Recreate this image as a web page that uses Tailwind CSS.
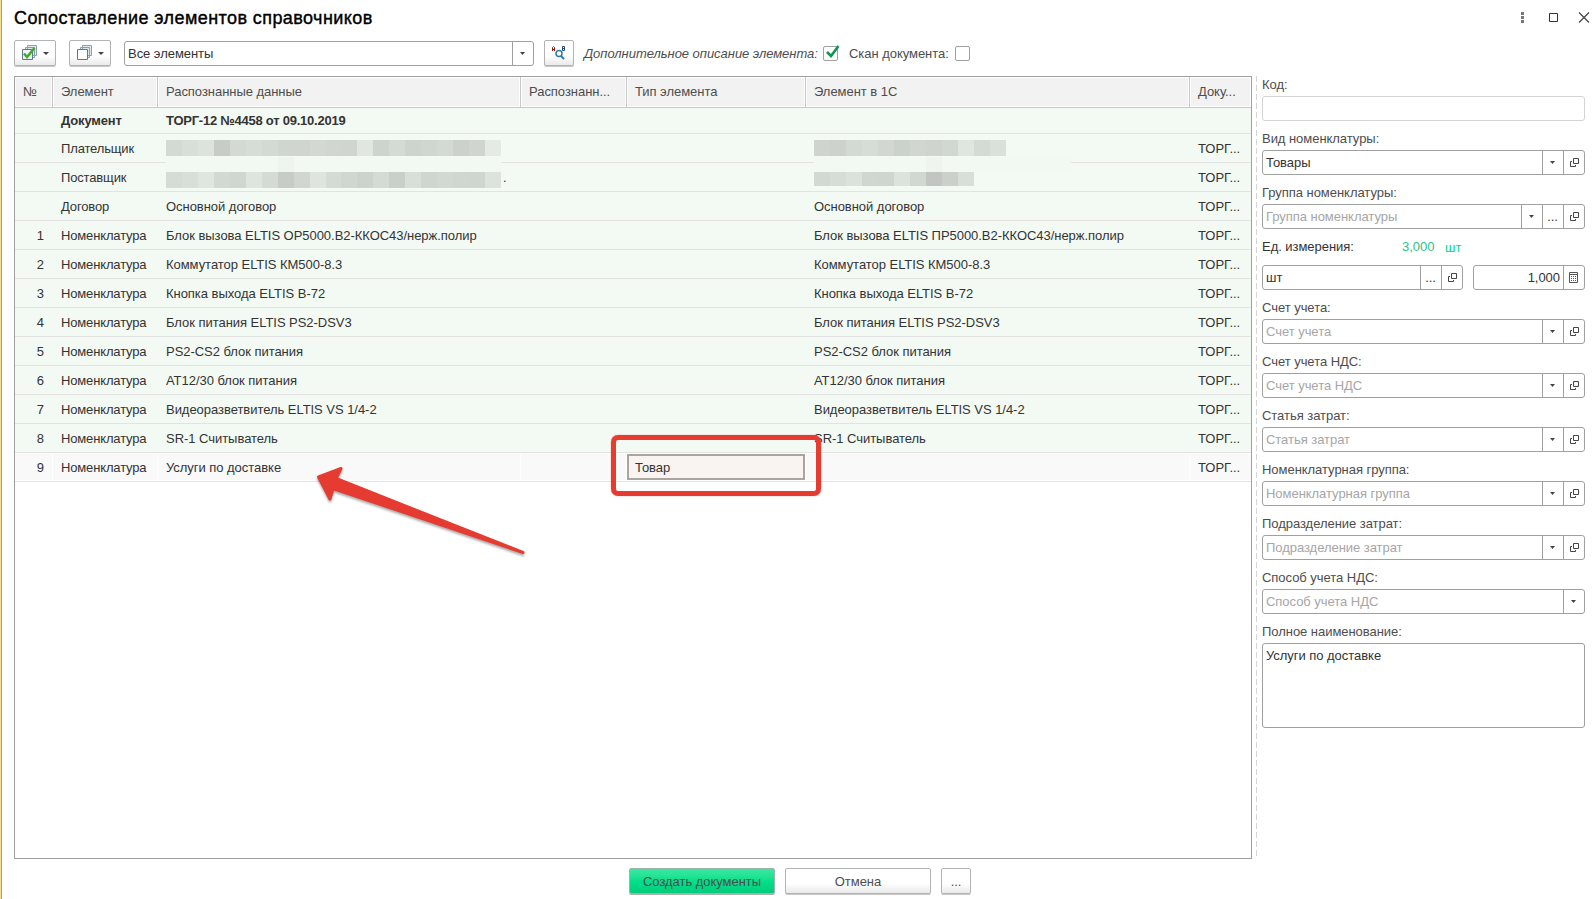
<!DOCTYPE html>
<html lang="ru">
<head>
    <meta charset="UTF-8">
    <meta name="viewport" content="width=device-width, initial-scale=1.0">
    <title>Сопоставление элементов справочников</title>
    <script src="https://cdn.jsdelivr.net/npm/@tailwindcss/browser@4"></script>
</head>
<body class="relative flex h-[899px] w-[1596px] overflow-hidden bg-white font-['Liberation_Sans',Arial,sans-serif] text-[13px] leading-4 tracking-[-0.04px] text-[#333]">
    <div class="w-[2px] shrink-0 border-r border-[#a0a0a0] bg-[#f5dd94]"></div>

    <div class="flex w-[1250px] shrink-0 flex-col pl-3">
        <!-- title -->
        <h1 class="h-10 pt-[7px] text-[18px] leading-[22px] tracking-[0.42px] text-black [-webkit-text-stroke:0.4px_black]">Сопоставление элементов справочников</h1>

        <!-- toolbar -->
        <div class="flex h-9 items-start">
            <button class="flex h-[26px] w-[42px] items-center gap-[5px] rounded-[2px] border border-[#b3b3b3] bg-linear-to-b from-white from-60% to-[#eaeaea] pl-[7px] shadow-[0_1px_0_#c8c8c8]">
                <svg width="16" height="16" viewBox="0 0 16 16" fill="#dfe8ef" stroke="#8da0b3">
                    <path d="M5.500.5h9v10h-9zM3.500 2.500h9v10h-9z"/>
                    <path d="M.5 4.500h10v10h-10z" fill="#eef4f8" stroke="#5d7890"/>
                    <path d="M2 8.500l3 3.500L12.500 3" fill="none" stroke="#3fae26" stroke-width="2.600"/>
                </svg>
                <svg width="6" height="3" viewBox="0 0 6 3"><path d="M0 0h6L3 3z" fill="#444"/></svg>
            </button>
            <button class="ml-[13px] flex h-[26px] w-[42px] items-center gap-[5px] rounded-[2px] border border-[#b3b3b3] bg-linear-to-b from-white from-60% to-[#eaeaea] pl-[7px] shadow-[0_1px_0_#c8c8c8]">
                <svg width="16" height="16" viewBox="0 0 16 16" fill="#dfe8ef" stroke="#8da0b3">
                    <path d="M5.500.5h9v10h-9zM3.500 2.500h9v10h-9z"/>
                    <path d="M.5 4.500h10v10h-10z" fill="#fff" stroke="#5d7890"/>
                </svg>
                <svg width="6" height="3" viewBox="0 0 6 3"><path d="M0 0h6L3 3z" fill="#444"/></svg>
            </button>
            <div class="mt-px ml-[13px] flex h-[25px] w-[410px] rounded-[3px] border border-[#a0a0a0]">
                <span class="flex-1 pt-1 pl-[3px]">Все элементы</span>
                <span class="flex w-[21px] items-center justify-center border-l border-[#a0a0a0] pr-px"><svg width="5" height="3" viewBox="0 0 5 3"><path d="M0 0h5L2.500 3z" fill="#444"/></svg></span>
            </div>
            <button class="ml-2.5 flex h-[26px] w-[30px] items-center justify-center rounded-[2px] border border-[#b3b3b3] bg-linear-to-b from-white from-60% to-[#eaeaea] pb-px shadow-[0_1px_0_#c8c8c8]">
                <svg width="14" height="14" viewBox="0 0 14 14" fill="none">
                    <path d="M.5 5V1.500L1.500.5l1 1V5M.5 3.500h2" stroke="#8b1a10"/>
                    <path d="M10.500.5v4h2v-4zM10.500 2.500h2" stroke="#174f86"/>
                    <circle cx="7" cy="7.500" r="3" stroke="#3079ae" stroke-width="1.500"/>
                    <path d="M9 10l3 3" stroke="#3079ae" stroke-width="2"/>
                </svg>
            </button>
            <span class="mt-1.5 ml-2.5 w-[239px] whitespace-nowrap text-[#4d4d4d] italic">Дополнительное описание элемента:</span>
            <span class="mt-1.5 size-[15px] rounded-[2px] border border-[#a0a0a0]">
                <svg class="-mt-[2px] ml-[1px]" width="15" height="14" viewBox="0 0 15 14"><path d="M2 7l4 4 7.500-10" fill="none" stroke="#0d9850" stroke-width="2.600"/></svg>
            </span>
            <span class="mt-1.5 ml-[11px] w-[106px] whitespace-nowrap text-[#4d4d4d]">Скан документа:</span>
            <span class="mt-1.5 size-[15px] rounded-[2px] border border-[#a0a0a0]"></span>
        </div>

        <!-- table -->
        <div class="h-[783px] w-[1238px] border border-[#a0a0a0]">
            <div id="head" class="grid h-[31px] grid-cols-[38px_105px_363px_106px_179px_384px_61px] border-b border-[#c8c8c8] text-[#4d4d4d]"></div>
            <div id="rows"></div>
        </div>

        <!-- bottom buttons -->
        <div class="mt-[9px] flex gap-2.5 pl-[615px]">
            <button class="h-[26px] w-[146px] rounded-[2px] border border-[#9fb5aa] bg-linear-to-b from-[#38e8a2] via-[#00e08a] to-[#00cc7c] pt-px text-[#4d4d4d] shadow-[0_1px_0_#b0b0b0]">Создать документы</button>
            <button class="h-[26px] w-[146px] rounded-[2px] border border-[#b3b3b3] bg-linear-to-b from-white from-60% to-[#eaeaea] pt-px text-[#4d4d4d] shadow-[0_1px_0_#c8c8c8]">Отмена</button>
            <button class="h-[26px] w-[30px] rounded-[2px] border border-[#b3b3b3] bg-linear-to-b from-white from-60% to-[#eaeaea] pt-px text-[#4d4d4d] shadow-[0_1px_0_#c8c8c8]">...</button>
        </div>
    </div>

    <!-- splitter -->
    <div class="mt-[76px] ml-1 h-[783px] w-px bg-[repeating-linear-gradient(to_bottom,#d4d4d4_0_6px,transparent_6px_9px)]"></div>

    <!-- item details -->
    <div class="ml-[5px] flex w-[334px] flex-col">
        <div class="flex h-[76px] items-start pt-3">
            <svg class="ml-[258px]" width="70" height="11" viewBox="0 0 70 11" fill="none">
                <path d="M1 0h3v3H1zM1 4h3v3H1zM1 8h3v3H1z" fill="#777"/>
                <path d="M29.500 1.500h8v8h-8z" stroke="#333"/>
                <path d="M59 .5l10 10M69 .5l-10 10" stroke="#444" stroke-width="1.200"/>
            </svg>
        </div>
        <div id="fields" class="w-[323px]"></div>
    </div>

    <!-- marks -->
    <div class="absolute top-[435px] left-[611px] h-[61px] w-[210px] rounded-[7px] border-[5px] border-[#e63b31] shadow-[0_0_1px_#e63b31]"></div>
    <svg class="absolute top-[460px] left-[310px] drop-shadow-[0_2px_1px_#0005]" width="220" height="100" viewBox="310 460 220 100">
        <path d="M318.500 477L341 468.500L336 478.500L523 552.500L333 488.500L330 499z" fill="#e63b31" stroke="#e63b31" stroke-width="3" stroke-linejoin="round"/>
    </svg>

    <script>
        const columns = ['№', 'Элемент', 'Распознанные данные', 'Распознанн...', 'Тип элемента', 'Элемент в 1С', 'Доку...'];
        const items = [
            ['Блок вызова ELTIS OP5000.B2-ККОС43/нерж.полир', 'Блок вызова ELTIS ПР5000.B2-ККОС43/нерж.полир'],
            ['Коммутатор ELTIS КМ500-8.3'],
            ['Кнопка выхода ELTIS B-72'],
            ['Блок питания ELTIS PS2-DSV3'],
            ['PS2-CS2 блок питания'],
            ['АТ12/30 блок питания'],
            ['Видеоразветвитель ELTIS VS 1/4-2'],
            ['SR-1 Считыватель']
        ];

        document.getElementById('head').innerHTML = columns.map(name =>
            `<div class="border-r border-[#c8c8c8] p-px last:border-r-0"><div class="h-full bg-[#f2f2f2] pt-1.5 pl-[7px] whitespace-nowrap">${name}</div></div>`
        ).join('');

        // hidden names, one shade per 16px block
        function mosaic(shades, size) {
            return `<div class="flex ${size}">` +
                shades.map(c => `<i class="h-full w-4" style="background:#${c}"></i>`).join('') + '</div>';
        }

        const payer = ['d3dad4', 'd8dfd9', 'dce3dd', 'c7ccc7', 'd3dad4', 'd6dcd6', 'd3d9d3', 'cfd5cf', 'd0d5d0', 'd3d8d3', 'd0d6d0', 'd0d5d0', 'e0e7e1', 'cdd3cd', 'd4dbd5', 'cdd3cd', 'd0d6d0', 'd3d9d3', 'ccd1cc', 'd0d5d0', 'e4ebe5'];
        const seller = ['d5dcd6', 'd8dfd9', 'dfe6e0', 'd2d9d3', 'd0d6d0', 'dee5df', 'd4dbd5', 'c7ccc7', 'd1d6d1', 'dee5df', 'd4dbd5', 'd0d7d1', 'ccd2cc', 'd4dbd5', 'c9cfc9', 'd8dfd9', 'cfd5cf', 'd2d8d2', 'd0d6d0', 'cfd5cf', 'dce3dd'];
        const payer1c = ['cfd4cf', 'cdd2cd', 'd3d9d3', 'd6dcd6', 'd2d7d2', 'cbd1cb', 'd1d6d1', 'cfd4cf', 'd1d7d1', 'dfe6e0', 'd4dad4', 'dae1db'];
        const seller1c = ['d2d8d2', 'd6ddd7', 'dbe2dc', 'd0d6d0', 'cfd5cf', 'dce3dd', 'd1d7d1', 'c2c6c2', 'cbd0cb', 'd8dfd9'];

        // blurred strip that hides the line between the two masked rows
        function strip(width) {
            return `<div class="absolute top-4 left-2 h-4 ${width} bg-[#f2f8f2] pl-28"><i class="block h-full w-4 bg-[#eef4ee]"></i></div>`;
        }

        function row(cells, cls) {
            return `<div class="grid grid-cols-[38px_105px_363px_106px_179px_384px_61px] border-b border-[#e3e3e3] ${cls}">` +
                cells.map((c, i) => `<div class="relative whitespace-nowrap ${i ? 'pl-2' : 'pr-[9px] text-right'} ${i === 1 ? 'tracking-[-0.15px]' : ''}">${c}</div>`).join('') + '</div>';
        }

        const green = 'h-[29px] bg-[#f3faf3] pt-[7px]';
        let html = row(['', 'Документ', 'ТОРГ-12 №4458 от 09.10.2019', '', '', '', ''], 'h-[26px] bg-[#f3faf3] pt-[5px] font-bold tracking-[-0.24px]');
        html += row(['', 'Плательщик', mosaic(payer, '-mt-px h-4 w-[335px]') + strip('w-[335px]'), '', '', mosaic(payer1c, '-mt-px h-4') + strip('w-[257px]'), 'ТОРГ...'], green);
        html += row(['', 'Поставщик', `<div class="flex">${mosaic(seller, 'mt-[2px] h-4 w-[335px]')}<span class="pl-[2px]">.</span></div>`, '', '', mosaic(seller1c, 'mt-[2px] h-3.5'), 'ТОРГ...'], green);
        html += row(['', 'Договор', 'Основной договор', '', '', 'Основной договор', 'ТОРГ...'], green);
        items.forEach(([src, dst = src], i) => {
            html += row([i + 1, 'Номенклатура', src, '', '', dst, 'ТОРГ...'], green);
        });
        html += `<div class="grid h-[29px] grid-cols-[38px_105px_363px_106px_179px_384px_61px] border-b border-[#e3e3e3] py-px">
            <div class="border-r border-white bg-[#f9f9f9] pt-1.5 pr-2 text-right">9</div>
            <div class="border-r border-white bg-[#f9f9f9] pt-1.5 pl-2 tracking-[-0.15px]">Номенклатура</div>
            <div class="border-r border-white bg-[#f9f9f9] pt-1.5 pl-2">Услуги по доставке</div>
            <div class="border-r border-white bg-[#f9f9f9]"></div>
            <div class="mr-px h-[26px] border-2 border-[#aca49e] bg-[#f9f3f1] pt-1 pl-1.5">Товар</div>
            <div class="border-r border-white bg-[#f9f9f9]"></div>
            <div class="bg-[#f9f9f9] pt-1.5 pl-2">ТОРГ...</div>
        </div>`;
        document.getElementById('rows').innerHTML = html;

        const icons = {
            drop: '<svg class="mr-px" width="5" height="3" viewBox="0 0 5 3"><path d="M0 0h5L2.500 3z" fill="#444"/></svg>',
            dots: '<span class="pr-px">...</span>',
            open: '<svg class="ml-px" width="9" height="9" viewBox="0 0 9 9" fill="none" stroke="#444"><path d="M3.500.5h5v5h-5zM2 3.500H.5v5h5V7"/></svg>',
            calc: '<svg class="mr-px" width="9" height="11" viewBox="0 0 9 11" fill="none" stroke="#555"><path d="M.5.5h8v10h-8zM1 2.500h7"/><path d="M2 4.500h5M2 6.500h5M2 8.500h5" stroke-dasharray="1 1"/></svg>'
        };

        function input(text, buttons, color = 'text-[#a6a6a6]', width = 'w-full') {
            return `<div class="flex h-[25px] ${width} rounded-[3px] border border-[#a0a0a0]">
                <span class="flex-1 pt-1 pl-[3px] whitespace-nowrap ${color}">${text}</span>` +
                buttons.map(b => `<span class="flex w-[21px] items-center justify-center border-l border-[#a0a0a0]">${icons[b]}</span>`).join('') + '</div>';
        }

        function field(label, body) {
            return `<div class="h-[54px]"><div class="h-5 pt-px text-[#4d4d4d]">${label}:</div>${body}</div>`;
        }

        document.getElementById('fields').innerHTML =
            field('Код', '<div class="h-[25px] rounded-[3px] border border-[#d4d4d4]"></div>') +
            field('Вид номенклатуры', input('Товары', ['drop', 'open'], 'text-[#333]')) +
            field('Группа номенклатуры', input('Группа номенклатуры', ['drop', 'dots', 'open'])) +
            `<div class="h-[61px]">
                <div class="flex h-[27px] pt-px"><span class="w-[140px]">Ед. измерения:</span><span class="w-[43px] text-[#2fbf8d]">3,000</span><span class="pt-px text-[#00d985]">шт</span></div>
                <div class="flex gap-2.5">${input('шт', ['dots', 'open'], 'text-[#333]', 'w-[201px]')}${input('1,000', ['calc'], 'pr-[3px] text-right text-[#333]', 'w-[112px]')}</div>
            </div>` +
            field('Счет учета', input('Счет учета', ['drop', 'open'])) +
            field('Счет учета НДС', input('Счет учета НДС', ['drop', 'open'])) +
            field('Статья затрат', input('Статья затрат', ['drop', 'open'])) +
            field('Номенклатурная группа', input('Номенклатурная группа', ['drop', 'open'])) +
            field('Подразделение затрат', input('Подразделение затрат', ['drop', 'open'])) +
            field('Способ учета НДС', input('Способ учета НДС', ['drop'])) +
            field('Полное наименование', '<div class="h-[85px] rounded-[3px] border border-[#a0a0a0] pt-1 pl-[3px]">Услуги по доставке</div>');
    </script>
</body>
</html>
